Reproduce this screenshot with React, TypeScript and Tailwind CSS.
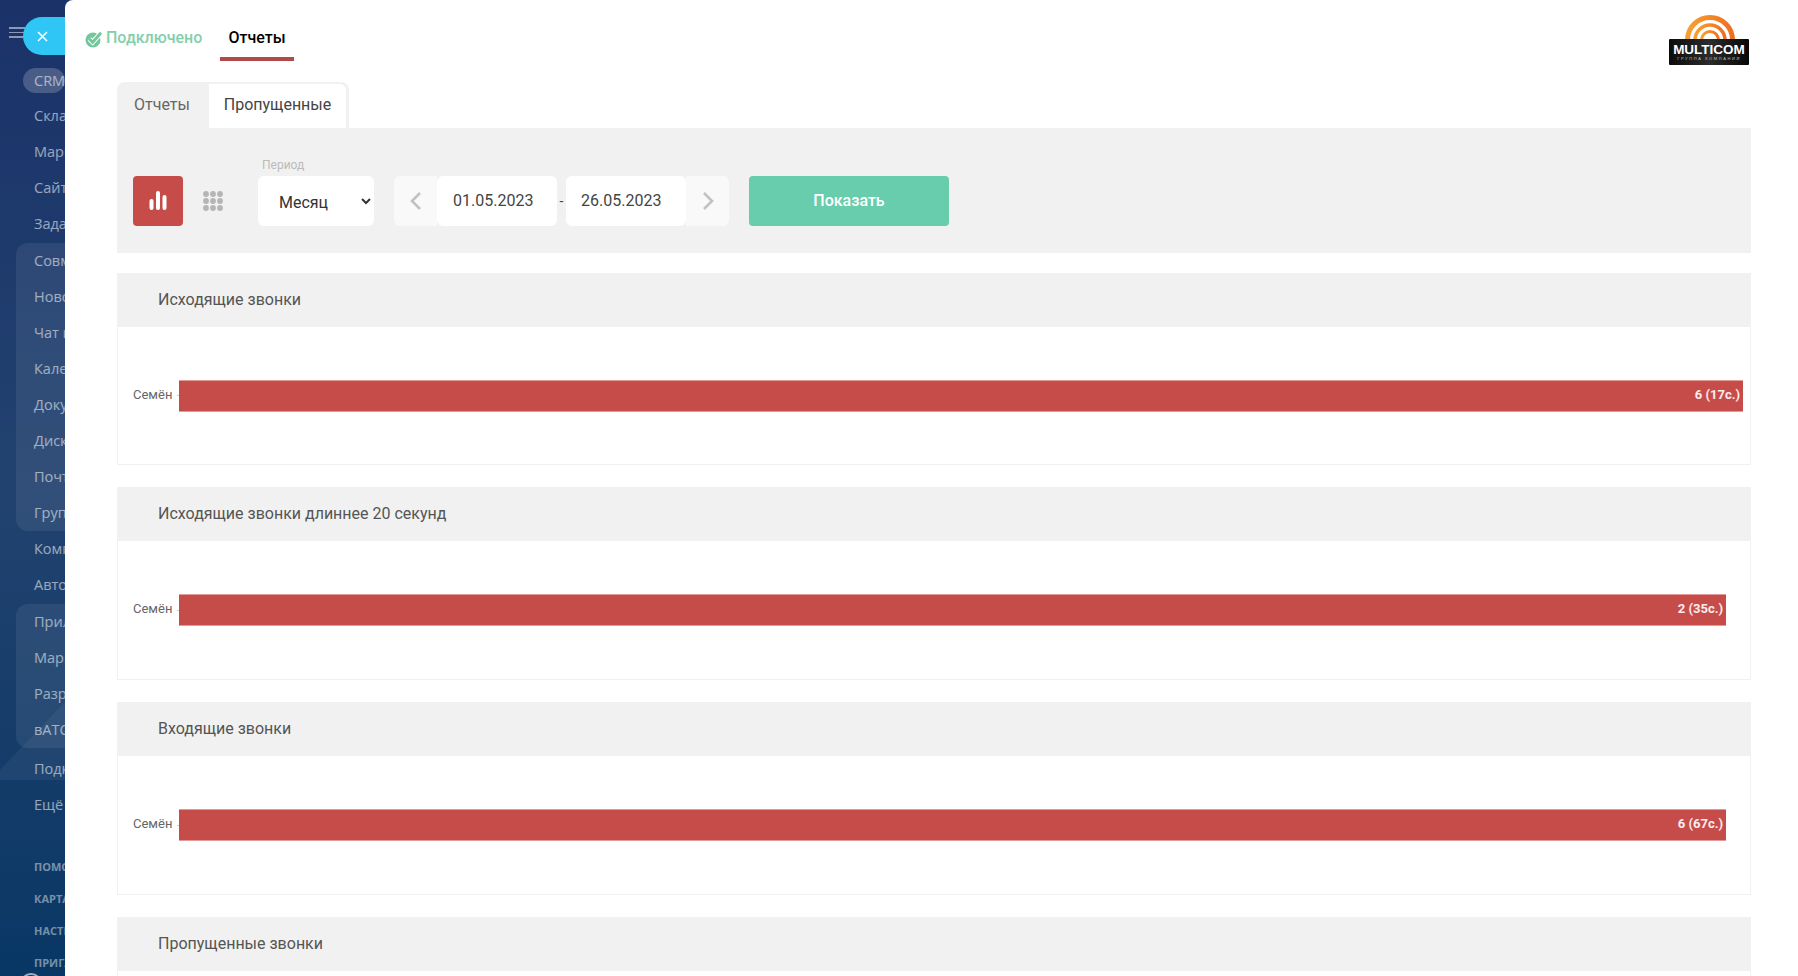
import React from "react";

const Item = ({ t, cls = "" }: { t: string; cls?: string }) => (
  <div className={`h-[36px] leading-[36px] pl-[34px] text-[14.5px] whitespace-nowrap text-white/55 ${cls}`}>{t}</div>
);

const Small = ({ t }: { t: string }) => (
  <div className="h-[32px] leading-[32px] pl-[34px] text-[11px] font-bold whitespace-nowrap text-white/45">{t}</div>
);

function Sidebar() {
  return (
    <aside className="relative w-[65px] shrink-0 h-full overflow-hidden bg-gradient-to-b from-[#1b3269] via-[#21426f] to-[#083765] font-['Open_Sans',sans-serif]">
      <svg className="absolute left-0 top-[690px]" width="65" height="90" viewBox="0 0 65 90">
        <path d="M0 80 L65 12 L65 90 L0 90Z" fill="#ffffff" fillOpacity="0.05" />
      </svg>
      <div className="absolute left-[9px] top-[27px] flex flex-col gap-[3px]">
        <span className="block w-[16px] h-[1.5px] bg-white/50" />
        <span className="block w-[16px] h-[1.5px] bg-white/50" />
        <span className="block w-[16px] h-[1.5px] bg-white/50" />
      </div>
      <div className="absolute left-[23px] top-[17px] w-[60px] h-[38px] rounded-[19px] bg-[#2fc6f6] flex items-center pl-[13px]">
        <svg width="13" height="13" viewBox="0 0 13 13" fill="none" stroke="#fff" strokeWidth="1.6">
          <path d="M2 2l9 9M11 2l-9 9" />
        </svg>
      </div>
      <div className="absolute left-[20px] top-[973px] w-[22px] h-[22px] rounded-full border-2 border-white/60" />
      <div className="relative pt-[62px]">
        <div className="h-[36px] flex items-center pl-[23px]">
          <div className="h-[25px] w-[60px] rounded-[13px] bg-white/20 pl-[11px] leading-[25px] text-[14.5px] text-white/55">CRM</div>
        </div>
        <Item t="Склад" />
        <Item t="Маркетинг" />
        <Item t="Сайты" />
        <Item t="Задачи" />
        <div className="ml-[16px] mt-[1px] w-[80px] rounded-[12px] bg-white/[0.07] -indent-[16px]">
          <Item t="Совместная" cls="text-white/35" />
          <Item t="Новости" />
          <Item t="Чат и звонки" />
          <Item t="Календарь" />
          <Item t="Документы" />
          <Item t="Диск" />
          <Item t="Почта" />
          <Item t="Группы" />
        </div>
        <Item t="Компания" />
        <Item t="Автоматизация" />
        <div className="ml-[16px] mt-[1px] w-[80px] rounded-[12px] bg-white/[0.07] -indent-[16px]">
          <Item t="Приложения" cls="text-white/35" />
          <Item t="Маркет" />
          <Item t="Разработчикам" />
          <Item t="вАТС" />
        </div>
        <Item t="Подключить" cls="mt-[3px]" />
        <Item t="Ещё" />
        <div className="h-[28px]" />
        <Small t="ПОМОЩЬ" />
        <Small t="КАРТА САЙТА" />
        <Small t="НАСТРОЙКИ" />
        <Small t="ПРИГЛАСИТЬ" />
      </div>
    </aside>
  );
}

function Logo() {
  return (
    <div className="relative w-[80px] h-[50px] mt-[14px]">
      <svg className="absolute left-0 top-0" width="80" height="30" viewBox="0 0 80 30" fill="none">
        <defs>
          <linearGradient id="arc" x1="0" y1="0" x2="1" y2="0">
            <stop offset="0" stopColor="#f7a032" />
            <stop offset="1" stopColor="#ee6f22" />
          </linearGradient>
        </defs>
        <circle cx="41" cy="26" r="22.5" stroke="url(#arc)" strokeWidth="5" />
        <circle cx="41" cy="26" r="15" stroke="url(#arc)" strokeWidth="3.5" />
        <circle cx="41" cy="26" r="8.5" stroke="url(#arc)" strokeWidth="3" />
      </svg>
      <div className="absolute left-0 -bottom-px w-[80px] h-[26px] rounded-[1px] bg-gradient-to-r from-[#0c0c0c] via-[#2c2c2c] to-[#080808] text-center font-['Liberation_Sans',sans-serif] text-white">
        <div className="text-[13.5px] font-bold leading-[13px] pt-[4px]">MULTICOM</div>
        <div className="text-[4px] leading-[5px] tracking-[1.6px] text-white/70 whitespace-nowrap">ГРУППА КОМПАНИЙ</div>
      </div>
    </div>
  );
}

function Section({ title, value, pr, h }: { title: string; value: string; pr: string; h: string }) {
  return (
    <section className="mb-[22px]">
      <div className="h-[54px] bg-[#f1f1f1] pl-[41px] flex items-center text-[16px] text-[#555]">{title}</div>
      <div className={`border border-t-0 border-[#f1f1f1] flex items-center pl-[15px] ${h} ${pr}`}>
        <span className="text-[13px] text-[#666] w-[44px] shrink-0 pb-[2px]">Семён</span>
        <span className="w-[2px] h-px bg-[#ccc] shrink-0" />
        <div className="flex-1 h-[32px] bg-[#c64c4a] border-y border-[#e29a98] flex items-center justify-end pr-[3px] pb-[2px] text-[13px] font-bold text-white/90">
          {value}
        </div>
      </div>
    </section>
  );
}

export default function App() {
  return (
    <div className="flex h-screen overflow-hidden bg-[#1b3269] font-['Roboto',sans-serif]">
      <Sidebar />
      <main className="flex-1 min-w-0 h-full overflow-hidden bg-white rounded-tl-[8px]">
        <div className="h-[82px] flex pl-[20px] pr-[49px] justify-between">
          <div className="flex items-start">
            <div className="flex items-center h-[75px] text-[16px] font-medium text-[#84cfab] w-[135px]">
              <svg className="mr-[3px] mt-[3px]" width="18" height="18" viewBox="0 0 18 18">
                <circle cx="8" cy="10" r="7.5" fill="#73c79d" />
                <path d="M4.5 9l3.2 3.2L16 2.8" fill="none" stroke="#fff" strokeWidth="5" />
                <path d="M4.5 9l3.2 3.2L16 2.8" fill="none" stroke="#73c79d" strokeWidth="3" />
              </svg>
              Подключено
            </div>
            <div className="h-[61px] w-[74px] text-center border-b-[4px] border-[#b04a48] text-[16px] font-medium text-black leading-[75px]">Отчеты</div>
          </div>
          <Logo />
        </div>
        <div className="pl-[52px] pr-[47px]">
          <div className="flex w-[232px] h-[46px] bg-[#f1f1f1] rounded-t-[8px]">
            <div className="w-[90px] flex items-center justify-center text-[16px] text-[#666] rounded-tl-[8px]">Отчеты</div>
            <div className="w-[137px] mt-[2px] pb-[2px] ml-[2px] flex items-center justify-center text-[16px] text-[#444] bg-white rounded-tr-[6px]">Пропущенные</div>
          </div>
          <div className="h-[125px] bg-[#f1f1f1] mb-[20px] pl-[16px] pb-[27px] flex items-end">
            <div className="w-[50px] h-[50px] rounded-[4px] bg-[#c64c4a] flex items-center justify-center">
              <svg width="18" height="20" viewBox="0 0 18 20" fill="#fff">
                <rect x="0.5" y="8" width="4" height="11" rx="2" />
                <rect x="7" y="0" width="4" height="19" rx="2" />
                <rect x="13.5" y="4" width="4" height="15" rx="2" />
              </svg>
            </div>
            <div className="w-[75px] h-[50px] pl-[20px] flex items-center justify-start">
              <svg width="20" height="20" viewBox="0 0 20 20" fill="#b5b5b5">
                {[3, 10, 17].map((y) => [3, 10, 17].map((x) => <circle key={`${x}-${y}`} cx={x} cy={y} r="2.9" />))}
              </svg>
            </div>
            <div className="relative">
              <div className="absolute left-[4px] -top-[18px] text-[12px] text-[#bbb] leading-[14px]">Период</div>
              <select defaultValue="Месяц" className="block w-[116px] h-[50px] rounded-[6px] bg-white pl-[17px] pt-[2px] text-[16px] text-[#333] outline-none font-['Roboto',sans-serif]">
                <option>Месяц</option>
              </select>
            </div>
            <button className="ml-[20px] w-[43px] h-[50px] rounded-l-[6px] bg-[#f9f9f9] flex items-center justify-center">
              <svg width="14" height="20" viewBox="0 0 14 20" fill="none" stroke="#c2c2c2" strokeWidth="2.6"><path d="M11 2L3 10l8 8" /></svg>
            </button>
            <div className="w-[120px] h-[50px] rounded-[6px] bg-white flex items-center pl-[16px] text-[16px] text-[#444]">01.05.2023</div>
            <div className="w-[9px] h-[50px] flex items-center justify-center text-[14px] text-[#444]">-</div>
            <div className="w-[120px] h-[50px] rounded-[6px] bg-white flex items-center pl-[15px] text-[16px] text-[#444]">26.05.2023</div>
            <button className="w-[43px] h-[50px] rounded-r-[6px] bg-[#f9f9f9] flex items-center justify-center">
              <svg width="14" height="20" viewBox="0 0 14 20" fill="none" stroke="#c2c2c2" strokeWidth="2.6"><path d="M3 2l8 8-8 8" /></svg>
            </button>
            <button className="ml-[20px] w-[200px] h-[50px] rounded-[4px] bg-[#67cdac] text-[16px] text-white font-medium">Показать</button>
          </div>
          <Section title="Исходящие звонки" value="6 (17с.)" pr="pr-[7px]" h="h-[138px]" />
          <Section title="Исходящие звонки длиннее 20 секунд" value="2 (35с.)" pr="pr-[24px]" h="h-[139px]" />
          <Section title="Входящие звонки" value="6 (67с.)" pr="pr-[24px]" h="h-[139px]" />
          <Section title="Пропущенные звонки" value="6 (0с.)" pr="pr-[24px]" h="h-[139px]" />
        </div>
      </main>
    </div>
  );
}
